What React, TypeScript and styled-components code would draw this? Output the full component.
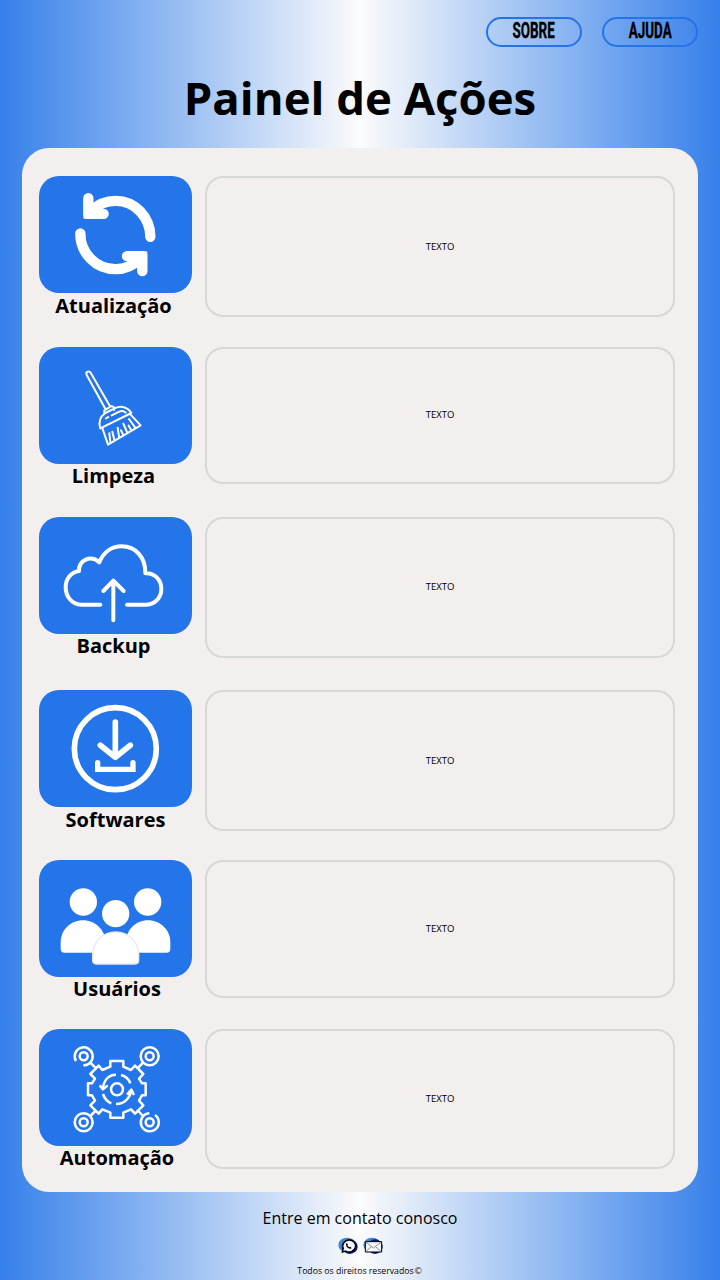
import React from "react";
import styled, { createGlobalStyle } from "styled-components";

const GlobalStyle = createGlobalStyle`
  * { box-sizing: border-box; }
  body { margin: 0; font-family: "Open Sans", "Noto Sans", sans-serif; color: #000; }
`;

const Page = styled.div`
  width: 720px;
  height: 1280px;
  overflow: hidden;
  display: flex;
  flex-direction: column;
  background: linear-gradient(90deg, #3680ea 0%, #fbfbfb 50%, #3680ea 100%);
`;

const TopNav = styled.nav`
  display: flex;
  justify-content: flex-end;
  gap: 20px;
  padding: 17px 22px 0 0;
  height: 47px;
`;

const NavButton = styled.button`
  width: 96px;
  height: 30px;
  padding: 0 0 2px;
  display: flex;
  align-items: center;
  justify-content: center;
  border: 2px solid #2474e8;
  border-radius: 15px;
  background: transparent;
  color: #000;
`;

const NavLabel = styled.span`
  font: 700 22px/24px Roboto, sans-serif;
  -webkit-text-stroke: 0.35px #000;
  transform: scaleX(0.61);
`;

const Title = styled.h1`
  margin: 0;
  height: 101px;
  padding-top: 18px;
  text-align: center;
  font-size: 45.5px;
  line-height: 64px;
  font-weight: 700;
  white-space: nowrap;
`;

const Panel = styled.main`
  width: 676px;
  height: 1043.5px;
  margin: 0 22px;
  padding: 28.4px 0 0 17px;
  border-radius: 27px;
  background: #f2efee;
`;

const Row = styled.section<{ $height: number }>`
  display: grid;
  grid-template-columns: 153px 470px;
  column-gap: 13px;
  align-items: start;
  height: ${(p) => p.$height}px;
`;

const Tile = styled.div`
  height: 117px;
  border-radius: 20px;
  background: #2474ea;
  overflow: hidden;

  svg {
    display: block;
    width: 153px;
    height: 117px;
  }
`;

const TileLabel = styled.h2<{ $left: number; $top: number }>`
  margin: 0;
  padding: ${(p) => p.$top}px 4px 0 ${(p) => p.$left}px;
  text-align: center;
  font-size: 20px;
  line-height: 24px;
  font-weight: 700;
`;

const TextBox = styled.div<{ $height: number }>`
  height: ${(p) => p.$height}px;
  display: flex;
  align-items: center;
  justify-content: center;
  border: 2px solid #d8d7d7;
  border-radius: 18px;
  font-size: 9.5px;
  line-height: 12px;
`;

const Footer = styled.footer`
  display: flex;
  flex-direction: column;
  align-items: center;
  padding-top: 15px;
`;

const Contact = styled.p`
  margin: 0;
  font-size: 16px;
  line-height: 22px;
`;

const Socials = styled.div`
  display: flex;
  gap: 5px;
  margin-top: 8px;

  svg {
    display: block;
    width: 20px;
    height: 18px;
  }
`;

const Rights = styled.p`
  display: flex;
  align-items: center;
  margin: 10px 0 0;
  font-size: 8.7px;
  line-height: 12px;
`;

const Mark = styled.span`
  font: 9px/10px "DejaVu Sans", sans-serif;
  color: #333;
`;

const RefreshIcon = () => (
  <svg viewBox="57 107.5 459 351" fill="none" stroke="#fff" strokeWidth="31" strokeLinecap="round">
    <path d="M391 290C391 232 346 182 287 182C257 182 233 193 215 212" />
    <path d="M205 174V221H251" strokeLinejoin="round" />
    <path d="M181 280C181 339 227 387 286 387C315 387 340 375 358 356" />
    <path d="M367 393V348H321" strokeLinejoin="round" />
    <path d="M205 221L235 198M367 348L337 371" strokeWidth="20" />
    <path d="M190 222H205V236H194Q190 236 190 232ZM382 347H367V333H378Q382 333 382 337Z" fill="#fff" stroke="none" />
  </svg>
);

const BroomIcon = () => (
  <svg viewBox="-63 -9 459 351" fill="none" stroke="#fff" strokeWidth="6" strokeLinecap="round" strokeLinejoin="round">
    <path d="M136 176L80 75C76 65 87 61 92 68L150 169" />
    <path d="M133 188V181L155 168L162 172V180" />
    <path d="M121 235C114 213 122 199 136 189L164 175C182 166 203 170 214 189Z" />
    <path d="M138 205L145 201M155 196L178 185C187 181 192 183 197 188" />
    <path d="M127 234L144 284L242 226L211 193" />
    <path d="M151 276L148 250M163 269L157 245M177 260L173 233M189 253L183 241M201 246L190 221M213 239L206 227M225 232L207 207" />
  </svg>
);

const CloudIcon = () => (
  <svg viewBox="-33 -9 459 351" fill="none" stroke="#fff" strokeWidth="12" strokeLinecap="round" strokeLinejoin="round">
    <path d="M151 254H95C66 254 47 230 47 202C47 176 64 156 87 153C86 121 122 103 148 127C161 96 186 79 215 79C257 79 287 112 286 160C313 158 334 179 334 207C334 234 314 254 286 254H231" />
    <path d="M190 301V184M160 213L190 182L221 213" />
  </svg>
);

const DownloadIcon = () => (
  <svg viewBox="-33 0 459 351" fill="none" stroke="#fff" strokeWidth="17" strokeLinecap="round" strokeLinejoin="round">
    <circle cx="196" cy="176" r="123" />
    <path d="M196 96V200M151 166L196 202L241 166" />
    <path d="M143 218V238H249V218" strokeLinejoin="miter" strokeWidth="16" />
  </svg>
);

const UsersIcon = () => (
  <svg viewBox="-33 1 459 351" fill="#fff">
    <circle cx="100" cy="127" r="41" />
    <circle cx="293" cy="127" r="41" />
    <circle cx="197" cy="162" r="41" />
    <path d="M32 248C32 211 62 182 99 182S166 211 166 248V279H43Q32 279 32 268Z" />
    <path d="M228 248C228 211 257 182 294 182S361 211 361 248V268Q361 279 350 279H228Z" />
    <path d="M128 285C128 247 159 217 197 217S266 247 266 285V302Q266 313 255 313H139Q128 313 128 302Z" stroke="#ebe9e9" strokeWidth="4" />
  </svg>
);

const AutomationIcon = () => (
  <svg viewBox="-63 -18 459 351" fill="none" stroke="#fff" strokeWidth="7.5" strokeLinejoin="round">
    <path d="M151 78H190V95L213 105L225 92L250 117L237 131L246 145H257V181H246L237 197L250 211L225 236L213 223L190 233V248H151V233L127 223L116 236L91 211L105 197L96 181H84V145H96L105 131L91 117L116 92L127 105L151 95Z" />
    <circle cx="171" cy="163" r="18" />
    <path d="M183 120Q204 125 211 145M168 119C145 119 130 137 129 162M129 177Q136 198 154 205M168 207C193 207 212 188 214 163" />
    <path d="M119 151L129 163L143 151M201 179L214 164L222 180" />
    <circle cx="71" cy="64" r="12" />
    <circle cx="269" cy="64" r="12" />
    <circle cx="71" cy="262" r="12" />
    <circle cx="269" cy="262" r="12" />
    <path d="M48 78A27 27 0 1 1 70 91M285 240A27 27 0 1 1 268 235" />
    <circle cx="269" cy="64" r="27" />
    <circle cx="71" cy="262" r="27" />
    <path d="M91 83L109 101M249 83L232 101M91 243L109 225M249 243L232 225" />
  </svg>
);

const WhatsAppIcon = () => (
  <svg viewBox="0 0 60 54">
    <ellipse cx="27" cy="24" rx="26" ry="22" fill="#3f86cf" />
    <ellipse cx="35" cy="29" rx="24" ry="22" fill="#0b1673" />
    <path d="M13 45L16 34A19 18 0 1 1 23 42Z" fill="#f4f6fa" stroke="#000" strokeWidth="4" />
    <path d="M25 18C20 26 32 39 41 34L37 29L33 31L28 25L30 22Z" fill="#000" />
  </svg>
);

const MailIcon = () => (
  <svg viewBox="0 0 60 54">
    <ellipse cx="27" cy="24" rx="26" ry="22" fill="#3f86cf" />
    <ellipse cx="36" cy="29" rx="23" ry="22" fill="#0b1673" />
    <path d="M7 14H56V45H7Z" fill="#f4f6fa" stroke="#000" strokeWidth="3" />
    <path d="M8 15L31 33L55 15M8 44L25 29M55 44L38 29" fill="none" stroke="#333" strokeWidth="1.6" />
  </svg>
);

const actions = [
  { label: "Atualização", Icon: RefreshIcon, row: 170.6, box: 141, left: 0, top: 1 },
  { label: "Limpeza", Icon: BroomIcon, row: 170, box: 137, left: 0, top: 0 },
  { label: "Backup", Icon: CloudIcon, row: 173.4, box: 141, left: 0, top: 0.5 },
  { label: "Softwares", Icon: DownloadIcon, row: 170.1, box: 141, left: 4, top: 1 },
  { label: "Usuários", Icon: UsersIcon, row: 168.9, box: 137.5, left: 7, top: 0 },
  { label: "Automação", Icon: AutomationIcon, row: 140, box: 139.5, left: 7, top: 0 },
];

export default function App() {
  return (
    <Page>
      <GlobalStyle />
      <TopNav>
        <NavButton><NavLabel>SOBRE</NavLabel></NavButton>
        <NavButton><NavLabel>AJUDA</NavLabel></NavButton>
      </TopNav>
      <Title>Painel de Ações</Title>
      <Panel>
        {actions.map(({ label, Icon, row, box, left, top }) => (
          <Row key={label} $height={row}>
            <div>
              <Tile><Icon /></Tile>
              <TileLabel $left={left} $top={top}>{label}</TileLabel>
            </div>
            <TextBox $height={box}>TEXTO</TextBox>
          </Row>
        ))}
      </Panel>
      <Footer>
        <Contact>Entre em contato conosco</Contact>
        <Socials>
          <WhatsAppIcon />
          <MailIcon />
        </Socials>
        <Rights>Todos os direitos reservados<Mark>©</Mark></Rights>
      </Footer>
    </Page>
  );
}
